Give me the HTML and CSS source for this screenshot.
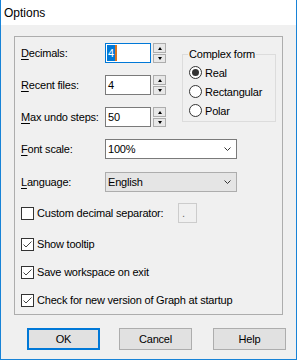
FILE: index.html
```html
<!DOCTYPE html>
<html>
<head>
<meta charset="utf-8">
<link rel="stylesheet" href="styles.css">
</head>
<body>
<div class="window">
  <div class="titlebar">Options</div>
  <div class="client">
    <div class="group">
      <div class="top">
        <div class="spins">
          <div class="row">
            <span class="lbl"><u>D</u>ecimals:</span>
            <div class="edit focus"><span class="sel">4</span><span class="caret"></span></div>
            <div class="spin"><span class="up"><i></i></span><span class="down"><i></i></span></div>
          </div>
          <div class="row">
            <span class="lbl"><u>R</u>ecent files:</span>
            <div class="edit">4</div>
            <div class="spin"><span class="up"><i></i></span><span class="down"><i></i></span></div>
          </div>
          <div class="row">
            <span class="lbl"><u>M</u>ax undo steps:</span>
            <div class="edit">50</div>
            <div class="spin"><span class="up"><i></i></span><span class="down"><i></i></span></div>
          </div>
        </div>
        <div class="complex">
          <span class="legend">Complex form</span>
          <div class="radios">
            <div class="radio checked"><span class="dot"></span><span>Real</span></div>
            <div class="radio"><span class="dot"></span><span>Rectangular</span></div>
            <div class="radio"><span class="dot"></span><span>Polar</span></div>
          </div>
        </div>
      </div>
      <div class="row combo-row">
        <span class="lbl"><u>F</u>ont scale:</span>
        <div class="combo">
          <span>100%</span>
          <svg class="chev" width="7" height="4" viewBox="0 0 7 4"><polyline points="0.5,0.5 3.5,3.5 6.5,0.5" fill="none" stroke="#333" stroke-width="1"/></svg>
        </div>
      </div>
      <div class="row combo-row2">
        <span class="lbl"><u>L</u>anguage:</span>
        <div class="combo ro">
          <span>English</span>
          <svg class="chev" width="7" height="4" viewBox="0 0 7 4"><polyline points="0.5,0.5 3.5,3.5 6.5,0.5" fill="none" stroke="#333" stroke-width="1"/></svg>
        </div>
      </div>
      <div class="row custom-row">
        <span class="cb"></span>
        <span class="cb-label wide">Custom decimal separator:</span>
        <div class="sepbox">.</div>
      </div>
      <div class="checkrow first">
        <span class="cb on"><svg width="11" height="11" viewBox="0 0 11 11"><polyline points="1.5,5.5 4,8 9.5,2.5" fill="none" stroke="#444" stroke-width="1"/></svg></span>
        <span class="cb-label">Show tooltip</span>
      </div>
      <div class="checkrow">
        <span class="cb on"><svg width="11" height="11" viewBox="0 0 11 11"><polyline points="1.5,5.5 4,8 9.5,2.5" fill="none" stroke="#444" stroke-width="1"/></svg></span>
        <span class="cb-label">Save workspace on exit</span>
      </div>
      <div class="checkrow">
        <span class="cb on"><svg width="11" height="11" viewBox="0 0 11 11"><polyline points="1.5,5.5 4,8 9.5,2.5" fill="none" stroke="#444" stroke-width="1"/></svg></span>
        <span class="cb-label">Check for new version of Graph at startup</span>
      </div>
    </div>
    <div class="buttons">
      <div class="btn default">OK</div>
      <div class="btn cancel">Cancel</div>
      <div class="btn help">Help</div>
    </div>
  </div>
</div>
</body>
</html>
```
FILE: styles.css
```css
* { box-sizing: border-box; }
body {
  margin: 0;
  background: #fff;
  font-family: "Liberation Sans", Arial, sans-serif;
  font-size: 11px;
  letter-spacing: -0.2px;
  color: #000;
}
.window {
  width: 297px;
  height: 360px;
  border: 1px solid #1883d7;
  border-top: none;
  display: flex;
  flex-direction: column;
}
.titlebar {
  height: 25px;
  line-height: 26px;
  padding-left: 3px;
  font-size: 12px;
  letter-spacing: 0;
  background: #fff;
  flex: none;
}
.client {
  flex: 1;
  background: #f0f0f0;
  padding: 11px 0 0 13px;
}
.group {
  width: 269px;
  height: 279px;
  border: 1px solid #adadad;
  padding: 6px 0 0 6px;
  display: flex;
  flex-direction: column;
}
.top { display: flex; height: 84px; flex: none; }
.spins { display: flex; flex-direction: column; gap: 12px; }
.row { display: flex; align-items: center; height: 20px; flex: none; }
.lbl { width: 84px; flex: none; }
.lbl u { text-decoration: underline; text-underline-offset: 2px; }
.edit {
  width: 46px;
  height: 20px;
  border: 1px solid #7a7a7a;
  background: #fff;
  padding-left: 2px;
  line-height: 18px;
}
.edit.focus {
  border-color: #0078d7;
  display: flex;
  align-items: center;
  padding-left: 1px;
}
.sel {
  background: #0078d7;
  color: #fff;
  height: 16px;
  line-height: 16px;
  padding: 0 1px;
  width: 8px;
}
.caret { width: 2px; height: 16px; background: #d9731f; }
.spin {
  margin-left: 2px;
  display: flex;
  flex-direction: column;
  gap: 1px;
  height: 20px;
}
.spin span {
  width: 13px;
  border: 1px solid #adadad;
  background: #e8e8e8;
  display: flex;
  align-items: center;
  justify-content: center;
}
.spin .up { height: 10px; }
.spin .down { height: 9px; }
.spin i {
  display: block;
  width: 1px;
  height: 0;
  border-left: 2px solid transparent;
  border-right: 2px solid transparent;
}
.spin .up i { border-bottom: 3px solid #000; }
.spin .down i { border-top: 3px solid #000; }

.complex {
  margin: 11px 0 0 16px;
  width: 94px;
  height: 68px;
  border: 1px solid #dcdcdc;
  padding: 0 0 0 5px;
}
.legend {
  display: block;
  width: fit-content;
  margin-top: -7px;
  height: 13px;
  line-height: 13px;
  padding: 0 1px;
  background: #f0f0f0;
}
.radios { margin-top: 2px; display: flex; flex-direction: column; }
.radio { display: flex; align-items: center; height: 19px; padding-left: 1px; gap: 3px; }
.dot {
  width: 13px;
  height: 13px;
  border: 1px solid #333;
  border-radius: 50%;
  background: #fff;
  display: flex;
  align-items: center;
  justify-content: center;
  flex: none;
}
.radio.checked .dot::after {
  content: "";
  width: 7px;
  height: 7px;
  border-radius: 50%;
  background: #333;
}

.combo-row { margin-top: 12px; }
.combo-row2 { margin-top: 13px; }
.combo {
  width: 132px;
  height: 20px;
  border: 1px solid #7a7a7a;
  background: #fff;
  display: flex;
  align-items: center;
  justify-content: space-between;
  padding: 0 5px 0 2px;
}
.combo.ro { background: #e5e5e5; border-color: #adadad; }

.custom-row { margin-top: 11px; }
.cb {
  width: 13px;
  height: 13px;
  border: 1px solid #333;
  background: #fff;
  flex: none;
  display: flex;
  align-items: center;
  justify-content: center;
}
.cb-label { margin-left: 3px; }
.cb-label.wide { width: 141px; }
.sepbox {
  width: 19px;
  height: 20px;
  border: 1px solid #cccccc;
  background: #f0f0f0;
  color: #6d6d6d;
  padding-left: 3px;
  line-height: 18px;
}
.checkrow {
  display: flex;
  align-items: center;
  height: 16px;
  margin-top: 12px;
  flex: none;
}
.checkrow.first { margin-top: 13px; }

.buttons {
  display: flex;
  margin: 13px 0 0 13px;
}
.btn {
  width: 73px;
  height: 22px;
  border: 1px solid #adadad;
  background: #e1e1e1;
  display: flex;
  align-items: center;
  justify-content: center;
}
.btn.default { border: 2px solid #0078d7; }
.btn.cancel { margin-left: 19px; }
.btn.help { margin-left: 21px; }
```
